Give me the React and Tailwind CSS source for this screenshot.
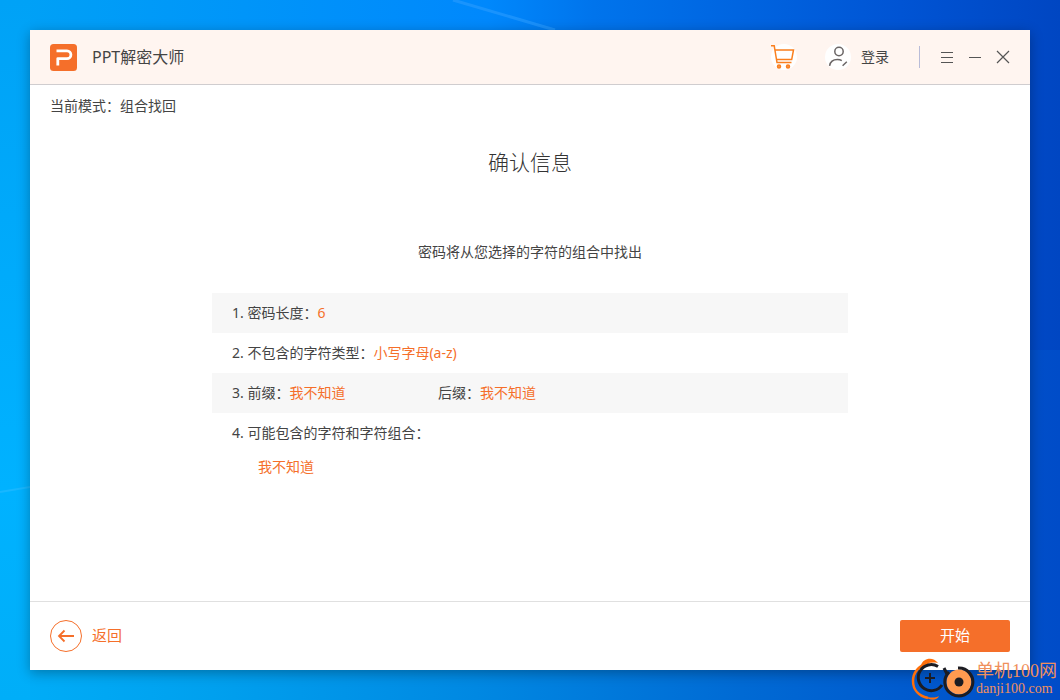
import clsx from 'clsx'

const Logo = () => (
    <svg viewBox="0 0 27 27" className="size-[27px]" aria-hidden="true">
        <rect width="27" height="27" rx="3.5" fill="#f56f2a" />
        <path d="M7.800 21.500V14.600h9.200a3.900 3.900 0 0 0 0-7.800H6.500" fill="none" stroke="#fff" strokeWidth="2.800" strokeLinejoin="round" />
    </svg>
)

const CartIcon = () => (
    <svg viewBox="0 0 26 26" className="size-[26px]" fill="none" stroke="#fa7f1e" strokeWidth="1.5" aria-hidden="true">
        <circle cx="13" cy="13" r="13" fill="#fff" stroke="none" />
        <path d="M0 1.700h3.200L6 18.600h14.500" />
        <path d="M4 6h18.500l-1.800 9.600H5.600" />
        <circle cx="8" cy="22.500" r="1.500" fill="#fb9a50" />
        <circle cx="17" cy="22.500" r="1.500" fill="#fb9a50" />
    </svg>
)

const UserIcon = () => (
    <svg viewBox="0 0 26 26" className="size-[26px]" fill="none" stroke="#6b6666" strokeWidth="1.5" aria-hidden="true">
        <circle cx="13" cy="13" r="13" fill="#fff" stroke="none" />
        <circle cx="14" cy="7.500" r="4.200" />
        <path d="M4.600 21.800c.7-4.200 3.800-6.200 7.800-6.200 1.800 0 3.200.3 4.400 1M17.600 21.800l4.200-4" />
    </svg>
)

const BackIcon = () => (
    <svg viewBox="0 0 32 32" className="size-8" fill="none" stroke="#f56f2a" aria-hidden="true">
        <circle cx="16" cy="16" r="15.500" />
        <path d="M24 16H9M14.500 10.500 9 16l5.500 5.500" strokeWidth="1.800" />
    </svg>
)

// full-width colon
const COLON = '\uff1a'

const ROWS = [
    [{ label: '1. 密码长度', value: '6' }],
    [{ label: '2. 不包含的字符类型', value: '小写字母(a-z)' }],
    [
        { label: '3. 前缀', value: '我不知道' },
        { label: '后缀', value: '我不知道' },
    ],
    [{ label: '4. 可能包含的字符和字符组合' }],
]

const Field = ({ label, value, className }) => (
    <div className={clsx('flex', className)}>
        <span>{label + COLON}</span>
        {value && <span className="text-[#f56f2a]">{value}</span>}
    </div>
)

const Wallpaper = () => (
    <svg viewBox="0 0 1060 700" preserveAspectRatio="none" className="absolute inset-0 size-full" aria-hidden="true">
        <defs>
            <linearGradient id="sky" x1="0" x2="1" y1="0" y2="0">
                <stop offset="0" stopColor="#00a2f6" />
                <stop offset=".46" stopColor="#0088fc" />
                <stop offset=".56" stopColor="#0074ec" />
                <stop offset=".85" stopColor="#0054d4" />
                <stop offset="1" stopColor="#0046c2" />
            </linearGradient>
            <linearGradient id="floor" x1="0" x2="1" y1="0" y2="0">
                <stop offset="0" stopColor="#00aef8" />
                <stop offset=".2" stopColor="#00a0ee" />
                <stop offset=".45" stopColor="#0088e2" />
                <stop offset=".7" stopColor="#006ad4" />
                <stop offset="1" stopColor="#004cc8" />
            </linearGradient>
            <linearGradient id="left" x1="0" x2="0" y1="0" y2="1">
                <stop offset="0" stopColor="#00a2f6" />
                <stop offset=".7" stopColor="#00b2ff" />
                <stop offset="1" stopColor="#00aef8" />
            </linearGradient>
        </defs>
        <path d="M0 0h1060v350H0z" fill="url(#sky)" />
        <path d="M0 350h1060v350H0z" fill="url(#floor)" />
        <path d="M0 0h30v700H0z" fill="url(#left)" />
        <path d="m453 0 102 30" stroke="#2a9cff" strokeWidth="3" opacity=".6" />
        <path d="m0 492 30-5" stroke="#30bcff" strokeWidth="2" opacity=".5" />
    </svg>
)

const Watermark = () => (
    <div className="absolute right-[3px] bottom-0 flex items-center gap-px font-['Liberation_Serif','Noto_Sans_CJK_SC',serif] text-[#f0905c]">
        <svg viewBox="0 0 64 42" className="h-[42px] w-16" fill="none" aria-hidden="true">
            <path d="M18 4C8 8 2 15 2 23c0 9 6 15 15 17" stroke="#ff6f0a" strokeWidth="2.500" />
            <path d="M10 7c2-7 12-9 17-2-6-1-11 0-17 2ZM14 38c5 2 10 2 14 0-2 5-10 5-14 0Z" fill="#ff6f0a" />
            <path d="M27 8.500A13 13 0 1 0 31 27M33 10l3 6" stroke="#1c1c22" strokeWidth="3" />
            <path d="M14 20h10M19 15v10" stroke="#1c1c22" strokeWidth="2" />
            <circle cx="48" cy="24" r="12.500" fill="#ff9a50" />
            <path d="M47 10a14 14 0 1 1-9 4" stroke="#1c1c22" strokeWidth="3" />
            <circle cx="48" cy="24" r="4.500" fill="#1c1c22" />
        </svg>
        <div className="flex flex-col">
            <span className="text-lg leading-5">单机100网</span>
            <span className="text-sm leading-4">danji100.com</span>
        </div>
    </div>
)

export default function App() {
    return (
        <div className="relative flex h-screen p-[30px] font-['Noto_Sans','Noto_Sans_CJK_SC',sans-serif] text-sm text-[#444]">
            <Wallpaper />
            <div className="relative flex flex-1 flex-col bg-white shadow-[0_3px_12px_rgba(0,0,0,0.3)]">
                <header className="flex h-[55px] items-center border-b border-[#d0cdcf] bg-[#fff5f0] px-5">
                    <Logo />
                    <h1 className="ml-[15px] text-base">PPT解密大师</h1>
                    <button type="button" aria-label="购物车" className="ml-auto">
                        <CartIcon />
                    </button>
                    <button type="button" className="ml-7 flex items-center gap-[10px]">
                        <UserIcon />
                        登录
                    </button>
                    <span className="mr-5 ml-[30px] h-[22px] w-px bg-[#b9bcd8]" />
                    <div className="flex items-center gap-[14px] text-[#555]">
                        <button type="button" aria-label="菜单">
                            <svg viewBox="0 0 14 14" className="size-[14px]" stroke="currentColor"><path d="M1 2.500h12M1 7.500h12M1 12.500h12" /></svg>
                        </button>
                        <button type="button" aria-label="最小化">
                            <svg viewBox="0 0 14 14" className="size-[14px]" stroke="currentColor"><path d="M1 7.500h12" /></svg>
                        </button>
                        <button type="button" aria-label="关闭">
                            <svg viewBox="0 0 14 14" className="size-[14px]" stroke="currentColor" strokeWidth="1.200"><path d="m1 1 12 12M13 1 1 13" /></svg>
                        </button>
                    </div>
                </header>

                <main className="flex flex-1 flex-col px-5 pt-[11px]">
                    <p className="leading-5">当前模式{COLON}组合找回</p>
                    <h2 className="mt-8 text-center text-[21px] leading-7 font-light text-[#333]">确认信息</h2>
                    <p className="mt-[66px] text-center leading-5">密码将从您选择的字符的组合中找出</p>
                    <ul className="mx-auto mt-[31px] w-full max-w-[636px]">
                        {ROWS.map((fields) => (
                            <li key={fields[0].label} className="flex h-10 items-center px-5 odd:bg-[#f7f7f7]">
                                {fields.map((field) => (
                                    <Field key={field.label} {...field} className={fields.length > 1 && 'min-w-[206px]'} />
                                ))}
                            </li>
                        ))}
                        <li className="px-[46px] pt-1 leading-5 text-[#f56f2a]">我不知道</li>
                    </ul>
                </main>

                <footer className="flex h-[69px] items-center justify-between border-t border-[#e0e0e0] px-5 text-[15px]">
                    <button type="button" className="flex items-center gap-[10px] text-[#f56f2a]">
                        <BackIcon />
                        返回
                    </button>
                    <button type="button" className="h-8 w-[110px] rounded-xs bg-[#f56f2a] text-white">开始</button>
                </footer>
            </div>
            <Watermark />
        </div>
    )
}
